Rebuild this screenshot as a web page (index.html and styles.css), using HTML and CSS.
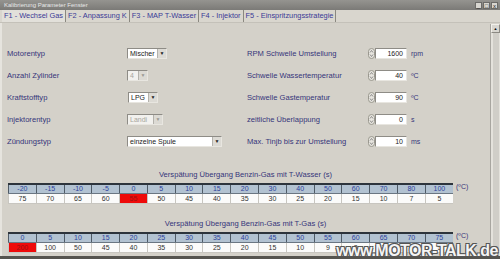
FILE: index.html
```html
<!DOCTYPE html>
<html>
<head>
  <title>Kalibrierung Parameter Fenster</title>
  <link rel="stylesheet" href="styles.css">
</head>
<body>
  <div class="window">
    <div class="titlebar">
      <span class="title">Kalibrierung Parameter Fenster</span>
      <div class="win-buttons">
        <span class="win-btn">_</span>
        <span class="win-btn">&#9633;</span>
        <span class="win-btn">x</span>
      </div>
    </div>

    <div class="tabs">
      <div class="tab active">F1 - Wechsel Gas</div>
      <div class="tab">F2 - Anpassung K</div>
      <div class="tab">F3 - MAP T-Wasser</div>
      <div class="tab">F4 - Injektor</div>
      <div class="tab">F5 - Einspritzungsstrategie</div>
    </div>

    <div class="main">
      <div class="content">
        <div class="form">
          <div class="col left">
            <div class="row">
              <span class="label">Motorentyp</span>
              <div class="select w40"><span class="value">Mischer</span><span class="arrow">&#9660;</span></div>
            </div>
            <div class="row">
              <span class="label">Anzahl Zylinder</span>
              <div class="select w21 disabled"><span class="value">4</span><span class="arrow">&#9660;</span></div>
            </div>
            <div class="row">
              <span class="label">Kraftstofftyp</span>
              <div class="select w30"><span class="value">LPG</span><span class="arrow">&#9660;</span></div>
            </div>
            <div class="row">
              <span class="label">Injektorentyp</span>
              <div class="select w36 disabled"><span class="value">Landi</span><span class="arrow">&#9660;</span></div>
            </div>
            <div class="row">
              <span class="label">Zündungstyp</span>
              <div class="select w95"><span class="value">einzelne Spule</span><span class="arrow">&#9660;</span></div>
            </div>
          </div>

          <div class="col right">
            <div class="row">
              <span class="label">RPM Schwelle Umstellung</span>
              <svg class="spin" width="7" height="11" viewBox="0 0 7 11"><rect x="0.5" y="0.5" width="6" height="10" rx="3" fill="#e6e4de" stroke="#9a988f"/><path d="M2 4.5 L3.5 2.5 L5 4.5 M2 6.5 L3.5 8.5 L5 6.5" fill="none" stroke="#777" stroke-width="0.8"/></svg>
              <div class="input">1600</div>
              <span class="unit">rpm</span>
            </div>
            <div class="row">
              <span class="label">Schwelle Wassertemperatur</span>
              <svg class="spin" width="7" height="11" viewBox="0 0 7 11"><rect x="0.5" y="0.5" width="6" height="10" rx="3" fill="#e6e4de" stroke="#9a988f"/><path d="M2 4.5 L3.5 2.5 L5 4.5 M2 6.5 L3.5 8.5 L5 6.5" fill="none" stroke="#777" stroke-width="0.8"/></svg>
              <div class="input">40</div>
              <span class="unit">ºC</span>
            </div>
            <div class="row">
              <span class="label">Schwelle Gastemperatur</span>
              <svg class="spin" width="7" height="11" viewBox="0 0 7 11"><rect x="0.5" y="0.5" width="6" height="10" rx="3" fill="#e6e4de" stroke="#9a988f"/><path d="M2 4.5 L3.5 2.5 L5 4.5 M2 6.5 L3.5 8.5 L5 6.5" fill="none" stroke="#777" stroke-width="0.8"/></svg>
              <div class="input">90</div>
              <span class="unit">ºC</span>
            </div>
            <div class="row">
              <span class="label">zeitliche Überlappung</span>
              <svg class="spin" width="7" height="11" viewBox="0 0 7 11"><rect x="0.5" y="0.5" width="6" height="10" rx="3" fill="#e6e4de" stroke="#9a988f"/><path d="M2 4.5 L3.5 2.5 L5 4.5 M2 6.5 L3.5 8.5 L5 6.5" fill="none" stroke="#777" stroke-width="0.8"/></svg>
              <div class="input">0</div>
              <span class="unit">s</span>
            </div>
            <div class="row">
              <span class="label">Max. Tinjb bis zur Umstellung</span>
              <svg class="spin" width="7" height="11" viewBox="0 0 7 11"><rect x="0.5" y="0.5" width="6" height="10" rx="3" fill="#e6e4de" stroke="#9a988f"/><path d="M2 4.5 L3.5 2.5 L5 4.5 M2 6.5 L3.5 8.5 L5 6.5" fill="none" stroke="#777" stroke-width="0.8"/></svg>
              <div class="input">10</div>
              <span class="unit">ms</span>
            </div>
          </div>
        </div>

        <div class="map first">
          <div class="map-title">Verspätung Übergang Benzin-Gas mit T-Wasser (s)</div>
          <div class="map-body">
            <table class="grid">
              <tr class="head">
                <td>-20</td><td>-15</td><td>-10</td><td>-5</td><td>0</td><td>5</td><td>10</td><td>15</td>
                <td>20</td><td>30</td><td>40</td><td>50</td><td>60</td><td>70</td><td>80</td><td>100</td>
              </tr>
              <tr class="data">
                <td>75</td><td>70</td><td>65</td><td>60</td><td class="hot">55</td><td>50</td><td>45</td><td>40</td>
                <td>35</td><td>30</td><td>25</td><td>20</td><td>15</td><td>10</td><td>7</td><td>5</td>
              </tr>
            </table>
            <span class="deg">(ºC)</span>
          </div>
        </div>

        <div class="map">
          <div class="map-title">Verspätung Übergang Benzin-Gas mit T-Gas (s)</div>
          <div class="map-body">
            <table class="grid">
              <tr class="head">
                <td>0</td><td>5</td><td>10</td><td>15</td><td>20</td><td>25</td><td>30</td><td>35</td>
                <td>40</td><td>45</td><td>50</td><td>55</td><td>60</td><td>65</td><td>70</td><td>75</td>
              </tr>
              <tr class="data">
                <td class="hot">200</td><td>100</td><td>50</td><td>45</td><td>40</td><td>35</td><td>30</td><td>25</td>
                <td>20</td><td>15</td><td>10</td><td>9</td><td>8</td><td>7</td><td>6</td><td>5</td>
              </tr>
            </table>
            <span class="deg">(ºC)</span>
          </div>
        </div>
      </div>

      <div class="scrollbar">
        <div class="scroll-up">&#9650;</div>
        <div class="scroll-track"></div>
      </div>
    </div>

    <div class="bottom-edge"></div>
    <div class="watermark">www.MOTOR-TALK.de</div>
  </div>
</body>
</html>
```

FILE: styles.css
```css
body {
  margin: 0;
  font-family: "Liberation Sans", Arial, sans-serif;
  background: #d4d1c9;
}
.window {
  position: relative;
  width: 500px;
  height: 259px;
  overflow: hidden;
  background: #d4d1c9;
  display: flex;
  flex-direction: column;
}
.titlebar {
  height: 10px;
  background: linear-gradient(#959490, #7b7a77);
  display: flex;
  align-items: center;
  justify-content: space-between;
  padding: 0 2px 0 4px;
}
.title {
  font-size: 6px;
  color: #e8e8e8;
}
.win-buttons {
  display: flex;
  gap: 1px;
}
.win-btn {
  width: 7px;
  height: 7px;
  background: #d8d6d0;
  border: 1px solid #6c6b68;
  font-size: 6px;
  line-height: 6px;
  text-align: center;
  color: #222;
  box-sizing: border-box;
}
.tabs {
  height: 12px;
  display: flex;
  align-items: stretch;
  padding-left: 2px;
  background: #d9d6ce;
  border-bottom: 1px solid #c4c1b9;
}
.tab {
  font-size: 7.4px;
  color: #3a3a96;
  line-height: 12px;
  padding: 0 2px;
  border-right: 1px solid #8a8880;
  white-space: nowrap;
}
.tab.active {
  background: #e2e0da;
}
.main {
  flex: 1;
  display: flex;
  min-height: 0;
}
.content {
  flex: 1;
  padding-left: 5px;
  border-left: 2px solid #e6e4de;
}
.form {
  display: flex;
  margin-top: 19px;
}
.col.left {
  width: 240px;
}
.row {
  height: 22px;
  display: flex;
  align-items: center;
}
.label {
  font-size: 7.6px;
  color: #35357a;
}
.left .label {
  width: 120px;
}
.right .label {
  width: 121px;
}
.select {
  height: 11px;
  box-sizing: border-box;
  background: #fff;
  border: 1px solid #8e8c86;
  border-right-color: #e8e6e0;
  border-bottom-color: #e8e6e0;
  display: flex;
  align-items: center;
  justify-content: space-between;
  font-size: 7px;
  color: #222;
}
.select .value {
  padding-left: 2px;
}
.select .arrow {
  width: 8px;
  height: 9px;
  background: #dcdad4;
  border-left: 1px solid #b4b2ac;
  font-size: 5px;
  line-height: 9px;
  text-align: center;
  color: #222;
}
.select.disabled {
  background: #f2f1ee;
  color: #a8a6a0;
}
.select.disabled .arrow {
  color: #9a9892;
}
.w21 { width: 21px; }
.w30 { width: 30px; margin-left: 1px; }
.w36 { width: 36px; }
.w40 { width: 40px; }
.w95 { width: 95px; }
.spin {
  display: block;
}
.input {
  width: 32px;
  height: 11px;
  box-sizing: border-box;
  background: #fff;
  border: 1px solid #8e8c86;
  border-right-color: #e8e6e0;
  border-bottom-color: #e8e6e0;
  font-size: 7px;
  line-height: 9px;
  text-align: right;
  padding-right: 3px;
  color: #222;
}
.unit {
  font-size: 7px;
  color: #35357a;
  margin-left: 4px;
}
.map {
  margin-top: 15px;
}
.map.first {
  margin-top: 18px;
}
.map-title {
  font-size: 7.6px;
  color: #35357a;
  text-align: center;
  width: 477px;
  height: 13px;
  line-height: 10px;
}
.map-body {
  display: flex;
  align-items: flex-start;
  margin-left: 1px;
}
.grid {
  width: 445px;
  table-layout: fixed;
  border-collapse: collapse;
  font-size: 7px;
}
.grid td {
  height: 8px;
  padding: 0;
  text-align: center;
  line-height: 8px;
}
.head td {
  background: #b2c2d1;
  color: #2f429c;
  border-top: 2px solid #2d343c;
  border-left: 1px solid #4e5a66;
  border-bottom: 1px solid #6a7682;
}
.data td {
  height: 9px;
  background: #fbfbfa;
  color: #333;
  border-left: 1px solid #c8c6c0;
  border-bottom: 1px solid #c8c6c0;
}
.data td.hot {
  background: #ee0a0a;
  color: #9a1010;
}
.deg {
  font-size: 7px;
  color: #35357a;
  margin-left: 3px;
}
.scrollbar {
  width: 9px;
  margin-top: 1px;
  border-left: 1px solid #a8a6a0;
  display: flex;
  flex-direction: column;
  background: #e4e2dc;
}
.scroll-up {
  height: 7px;
  background: #d8d6d0;
  border: 1px solid #8c8a84;
  border-top-color: #f2f0ea;
  border-left-color: #f2f0ea;
  font-size: 4px;
  line-height: 7px;
  text-align: center;
  color: #111;
}
.scroll-track {
  flex: 1;
  margin: 0 1px 0 2px;
  background: #d0cec8;
}
.bottom-edge {
  height: 3px;
  background: #55544f;
}
.watermark {
  position: absolute;
  right: 2px;
  bottom: -1px;
  font-size: 16px;
  font-weight: bold;
  line-height: 18px;
  color: #f4f4f4;
  letter-spacing: -0.5px;
  text-shadow: -1px -1px 0 #555, 1px -1px 0 #555, -1px 1px 0 #555, 1px 1px 0 #555;
}
```
